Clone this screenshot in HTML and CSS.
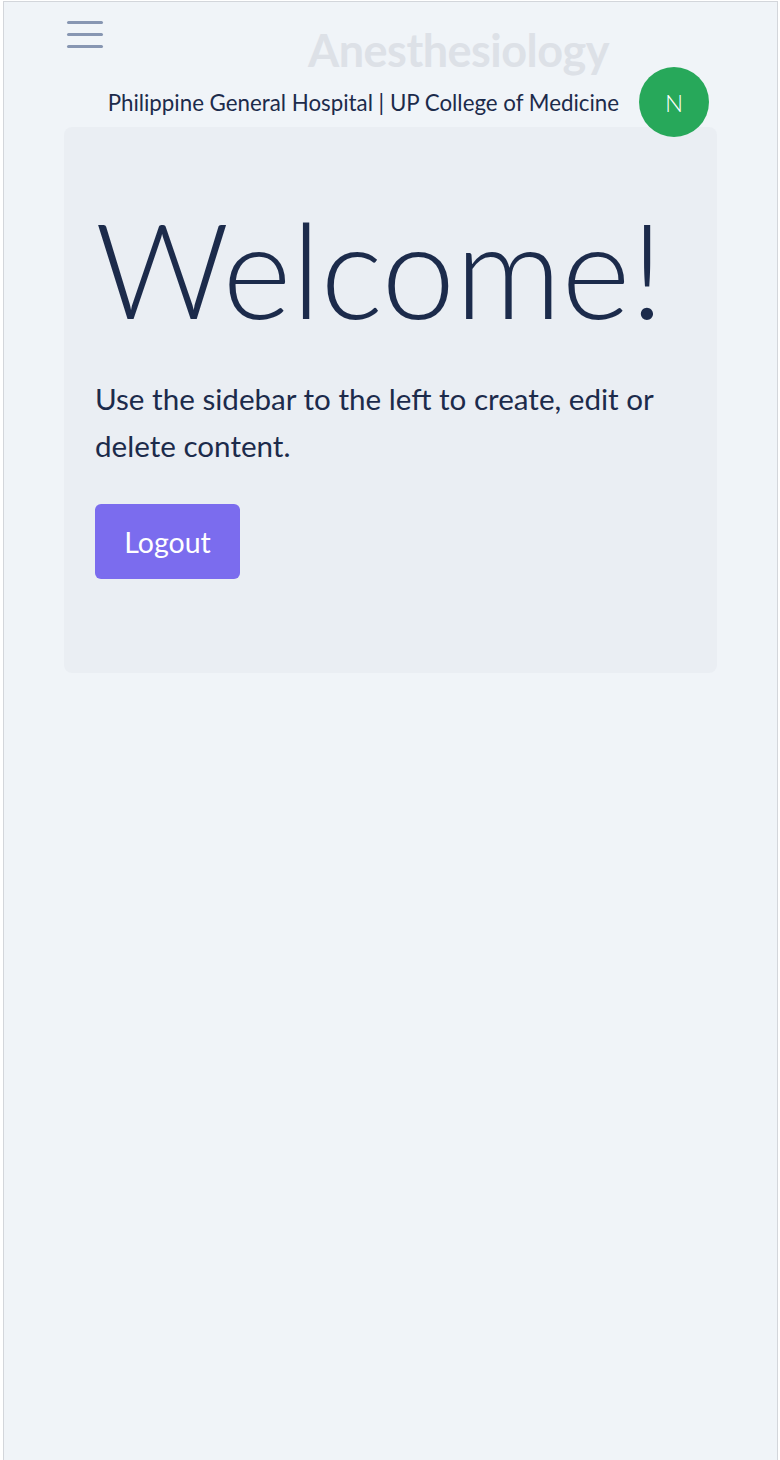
FILE: index.html
```html
<!DOCTYPE html>
<html>
<head>
<meta charset="utf-8">
<link rel="stylesheet" href="styles.css">
</head>
<body>
<div class="frame">
  <header class="header">
    <div class="top-row">
      <button class="menu" aria-label="Menu">
        <span></span><span></span><span></span>
      </button>
      <h1 class="brand">Anesthesiology</h1>
    </div>
    <div class="sub-row">
      <p class="subtitle">Philippine General Hospital | UP College of Medicine</p>
      <div class="avatar">N</div>
    </div>
  </header>
  <main class="card">
    <h2 class="welcome">Welcome!</h2>
    <p class="lead">Use the sidebar to the left to create, edit or delete content.</p>
    <button class="logout">Logout</button>
  </main>
</div>
</body>
</html>
```
FILE: styles.css
```css
html, body {
  margin: 0;
  padding: 0;
  background: #ffffff;
}
body {
  font-family: "Lato", "Noto Sans", sans-serif;
  color: #1c2b4b;
}
.frame {
  box-sizing: border-box;
  margin: 1px 0 0 3px;
  width: 775px;
  height: 1459px;
  border: 1px solid #d3d6db;
  border-bottom: none;
  background: #f0f4f8;
}
.header {
  padding: 0 68px 0 63px;
}
.top-row {
  display: flex;
  align-items: flex-start;
  height: 65px;
}
.menu {
  display: flex;
  flex-direction: column;
  gap: 9px;
  width: 36px;
  padding: 0;
  margin-top: 19px;
  border: none;
  background: none;
}
.menu span {
  display: block;
  width: 36px;
  height: 3px;
  border-radius: 2px;
  background: #8796b2;
}
.brand {
  margin: 26px 0 0 205px;
  font-size: 45px;
  font-weight: 700;
  line-height: 1;
  color: #dde1e7;
  letter-spacing: -0.5px;
  white-space: nowrap;
}
.sub-row {
  display: flex;
  justify-content: flex-end;
  align-items: center;
  gap: 20px;
  height: 70px;
  position: relative;
  z-index: 1;
}
.subtitle {
  margin: 0;
  font-size: 22.3px;
  color: #1c2b4b;
  white-space: nowrap;
}
.avatar {
  flex: none;
  width: 70px;
  height: 70px;
  border-radius: 50%;
  background: #27a85a;
  color: #ffffff;
  font-size: 24px;
  font-weight: 300;
  display: flex;
  align-items: center;
  justify-content: center;
}
.card {
  display: block;
  box-sizing: border-box;
  width: 653px;
  height: 546px;
  margin: -10px 0 0 60px;
  padding: 62px 30px 0 31px;
  background: #eaeef3;
  border-radius: 8px;
}
.welcome {
  margin: 0;
  font-size: 132px;
  font-weight: 300;
  line-height: 1.2;
  color: #1c2b4b;
}
.lead {
  margin: 28px 0 0 0;
  font-size: 29.6px;
  line-height: 47px;
  color: #1c2b4b;
}
.logout {
  margin-top: 35px;
  width: 145px;
  height: 75px;
  border: none;
  border-radius: 6px;
  background: #7b6cee;
  color: #ffffff;
  font-family: inherit;
  font-size: 28.5px;
}
```
